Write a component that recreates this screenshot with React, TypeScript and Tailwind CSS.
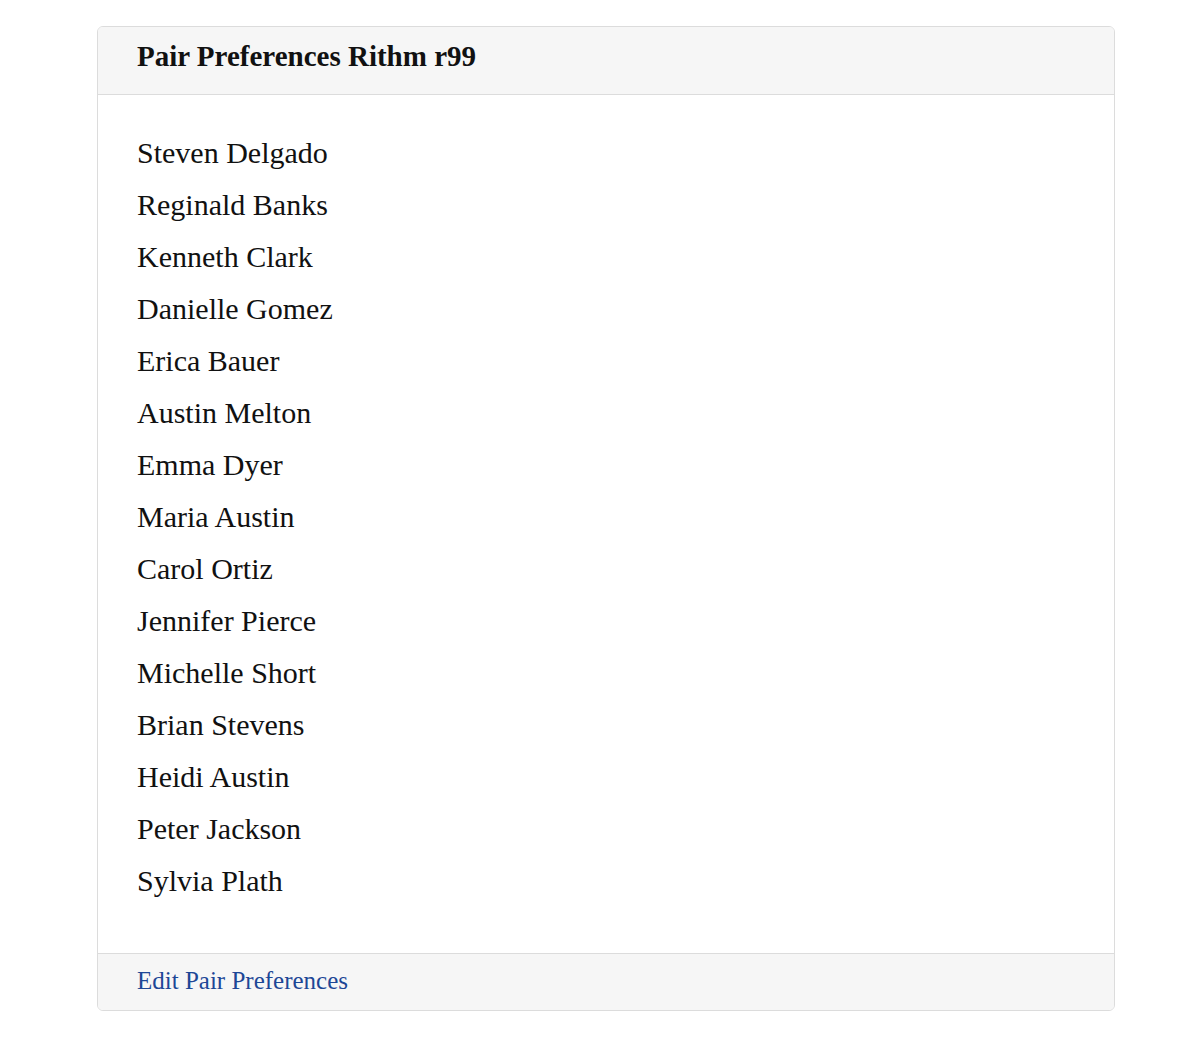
import React from "react";

const names = [
  "Steven Delgado",
  "Reginald Banks",
  "Kenneth Clark",
  "Danielle Gomez",
  "Erica Bauer",
  "Austin Melton",
  "Emma Dyer",
  "Maria Austin",
  "Carol Ortiz",
  "Jennifer Pierce",
  "Michelle Short",
  "Brian Stevens",
  "Heidi Austin",
  "Peter Jackson",
  "Sylvia Plath",
];

export default function App() {
  return (
    <div className="min-h-screen bg-white pt-[26px] pl-[97px]" style={{ fontFamily: '"Liberation Serif", serif' }}>
      <div className="w-[1018px] rounded-[6px] border border-[#dcdcdc] overflow-hidden">
        <div className="h-[68px] bg-[#f6f6f6] border-b border-[#dcdcdc] flex items-center pl-[39px] pb-[7px]">
          <h1 className="text-[29px] font-semibold text-[#111]">Pair Preferences Rithm r99</h1>
        </div>
        <ul className="pl-[39px] pt-[31px] pb-[46px] bg-white">
          {names.map((n) => (
            <li key={n} className="h-[52.07px] flex items-center text-[30px] text-[#111]">
              {n}
            </li>
          ))}
        </ul>
        <div className="h-[57px] bg-[#f6f6f6] border-t border-[#dcdcdc] flex items-center pl-[39px] pb-[2px]">
          <a className="text-[25px] text-[#1d4796]">Edit Pair Preferences</a>
        </div>
      </div>
    </div>
  );
}
